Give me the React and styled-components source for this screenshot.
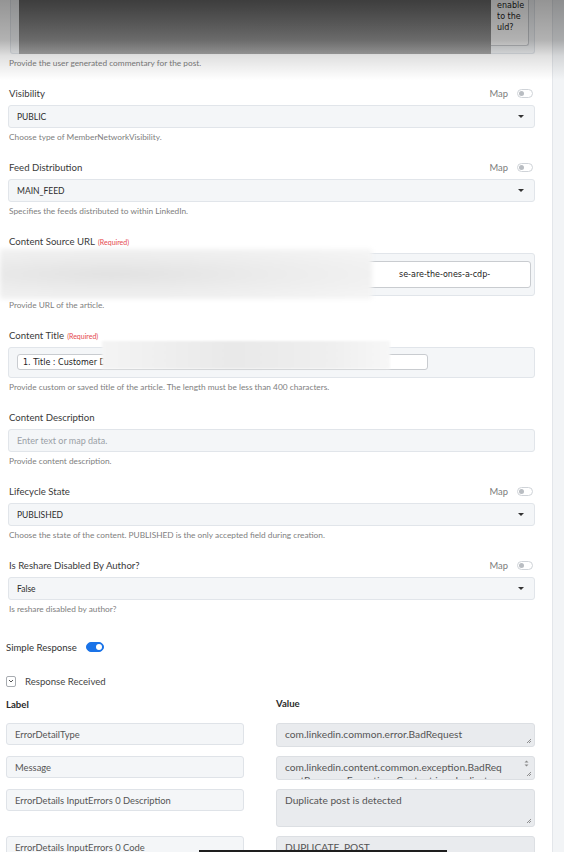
import React from "react";
import styled, { createGlobalStyle, css } from "styled-components";

const GlobalStyle = createGlobalStyle`
  html, body {
    margin: 0;
    padding: 0;
    background: #ffffff;
  }
  body {
    font-family: Lato, "Open Sans", sans-serif;
    color: #333;
  }
`;

const FIELDS = [
  {
    label: "Visibility",
    type: "select",
    value: "PUBLIC",
    map: true,
    help: "Choose type of MemberNetworkVisibility.",
  },
  {
    label: "Feed Distribution",
    type: "select",
    value: "MAIN_FEED",
    map: true,
    help: "Specifies the feeds distributed to within LinkedIn.",
  },
  {
    label: "Content Source URL",
    required: true,
    type: "url",
    value: "se-are-the-ones-a-cdp-",
    help: "Provide URL of the article.",
  },
  {
    label: "Content Title",
    required: true,
    type: "title",
    value: "1. Title : Customer D",
    help: "Provide custom or saved title of the article. The length must be less than 400 characters.",
  },
  {
    label: "Content Description",
    type: "text",
    placeholder: "Enter text or map data.",
    help: "Provide content description.",
  },
  {
    label: "Lifecycle State",
    type: "select",
    value: "PUBLISHED",
    map: true,
    help: "Choose the state of the content. PUBLISHED is the only accepted field during creation.",
  },
  {
    label: "Is Reshare Disabled By Author?",
    type: "select",
    value: "False",
    map: true,
    help: "Is reshare disabled by author?",
  },
];

const RESPONSE = [
  { label: "ErrorDetailType", value: "com.linkedin.common.error.BadRequest", h: 24 },
  {
    label: "Message",
    value:
      "com.linkedin.content.common.exception.BadRequestResponseException: Content is a duplicate",
    h: 24,
    scroll: true,
  },
  { label: "ErrorDetails InputErrors 0 Description", value: "Duplicate post is detected", h: 38 },
  { label: "ErrorDetails InputErrors 0 Code", value: "DUPLICATE_POST", h: 24 },
];

const Page = styled.div`
  position: relative;
  display: flex;
  height: 852px;
  overflow: hidden;
  background: #fff;
`;

const Main = styled.div`
  flex: 1;
  padding: 0 17px 0 6px;
  min-width: 0;
`;

const ScrollTrack = styled.div`
  width: 11px;
  background: #f2f4f6;
  border-left: 1px solid #e3e6ea;
`;

const Form = styled.div`
  padding-left: 2px;
`;

const Field = styled.div`
  position: relative;
  margin-bottom: 18px;
`;

const FieldHead = styled.div`
  display: flex;
  align-items: center;
  justify-content: space-between;
  height: 12px;
  margin-bottom: 6px;
  padding-left: 1px;
`;

const Label = styled.span`
  font-size: 9.6px;
  color: #3a3a3a;
`;

const Required = styled.span`
  margin-left: 3px;
  font-size: 7px;
  color: #e5484d;
`;

const MapGroup = styled.div`
  display: flex;
  align-items: center;
  gap: 9px;
  margin-right: 2px;
  font-size: 9.4px;
  color: #7c7c7c;
`;

const Switch = styled.span`
  position: relative;
  display: inline-block;
  box-sizing: border-box;
  width: ${(p) => (p.$on ? 18 : 16)}px;
  height: ${(p) => (p.$on ? 10 : 9)}px;
  border-radius: 6px;
  border: 1px solid ${(p) => (p.$on ? "#1a73e8" : "#cfd3d8")};
  background: ${(p) => (p.$on ? "#1a73e8" : "#fff")};

  &::after {
    content: "";
    position: absolute;
    top: 1px;
    ${(p) =>
      p.$on
        ? css`
            right: 1px;
            width: 6px;
            height: 6px;
            background: #fff;
          `
        : css`
            left: 1px;
            width: 5px;
            height: 5px;
            background: #b9bdc2;
          `}
    border-radius: 50%;
  }
`;

const Select = styled.div`
  box-sizing: border-box;
  display: flex;
  align-items: center;
  justify-content: space-between;
  height: 23px;
  padding: 0 10px 0 8px;
  border: 1px solid #e1e5ea;
  border-radius: 3px;
  background: #f4f6f8;
  font-size: 8.5px;
  color: #2c2c2c;
`;

const Caret = styled.span`
  width: 0;
  height: 0;
  border-left: 3px solid transparent;
  border-right: 3px solid transparent;
  border-top: 3px solid #333;
`;

const Placeholder = styled.span`
  color: #9aa0a6;
  font-size: 9px;
`;

const Well = styled.div`
  box-sizing: border-box;
  height: ${(p) => p.$h}px;
  padding: ${(p) => p.$pad};
  border: 1px solid #e1e5ea;
  border-radius: 3px;
  background: #f4f6f8;
`;

const InnerInput = styled.div`
  box-sizing: border-box;
  display: flex;
  align-items: center;
  width: ${(p) => p.$w || "auto"};
  height: 100%;
  padding: 0 5px;
  border: 1px solid #c9ccd0;
  border-radius: 3px;
  background: #fff;
  font-family: "DejaVu Sans", Verdana, sans-serif;
  font-size: 8px;
  color: #222;
`;

const UrlText = styled.span`
  margin-left: auto;
  width: 126px;
`;

const Help = styled.div`
  margin-top: 4px;
  padding-left: 1px;
  line-height: 11px;
  font-size: 8.3px;
  color: #808080;
`;

const Commentary = styled.div`
  position: relative;
  margin-left: 2px;
`;

const CommentWell = styled.div`
  box-sizing: border-box;
  height: 54px;
  padding: 0 5px 7px 8px;
  border: 1px solid #e1e5ea;
  border-top: none;
  border-radius: 0 0 3px 3px;
  background: #f4f6f8;
`;

const CommentBox = styled.div`
  box-sizing: border-box;
  display: flex;
  justify-content: flex-end;
  height: 100%;
  border: 1px solid #c9ccd0;
  border-top: none;
  border-radius: 0 0 3px 3px;
  background: #fff;
`;

const CommentLines = styled.div`
  width: 31px;
  font-family: "DejaVu Sans", Verdana, sans-serif;
  font-size: 8px;
  line-height: 11px;
  color: #222;
  white-space: nowrap;
  overflow: hidden;
`;

/* soft patches laid over private text */
const Smudge = styled.div`
  position: absolute;
  pointer-events: none;
  left: ${(p) => p.$x}px;
  top: ${(p) => p.$y}px;
  width: ${(p) => p.$w}px;
  height: ${(p) => p.$h}px;
  background: ${(p) => p.$bg};
  filter: blur(${(p) => p.$blur || 0}px);
`;

const TopShade = styled.div`
  position: absolute;
  left: 0;
  top: 0;
  right: 0;
  height: 80px;
  pointer-events: none;
  background: linear-gradient(
    rgba(0, 0, 0, 0.42) 0px,
    rgba(0, 0, 0, 0.3) 40px,
    rgba(0, 0, 0, 0.12) 56px,
    rgba(0, 0, 0, 0) 80px
  );
`;

const SwitchRow = styled.div`
  display: flex;
  align-items: center;
  gap: 9px;
  height: 12px;
  margin-top: 26px;
  font-size: 9.6px;
  color: #333;
`;

const ToggleRow = styled.div`
  display: flex;
  align-items: center;
  gap: 9px;
  height: 12px;
  margin-top: 22px;
  font-size: 9.6px;
  color: #444;
`;

const ChevronBox = styled.span`
  box-sizing: border-box;
  display: inline-flex;
  align-items: center;
  justify-content: center;
  width: 10px;
  height: 11px;
  border: 1px solid #a8acb1;
  border-radius: 2px;
`;

const Grid = styled.div`
  display: grid;
  grid-template-columns: 238px 259px;
  column-gap: 32px;
  row-gap: 9px;
  align-items: start;
`;

const ColHead = styled.div`
  height: 12px;
  line-height: 12px;
  margin: 12px 0 3px;
  font-size: 9.6px;
  font-weight: 700;
  color: #2b2b2b;
  transform: translateY(${(p) => p.$dy || 0}px);
`;

const KeyCell = styled.div`
  box-sizing: border-box;
  display: flex;
  align-items: center;
  height: 22px;
  padding: 0 8px;
  border: 1px solid #dfe3e8;
  border-radius: 3px;
  background: #f4f6f8;
  font-size: 9.4px;
  color: #555;
`;

const ValueCell = styled.div`
  position: relative;
  box-sizing: border-box;
  height: ${(p) => p.$h}px;
  padding: 4px ${(p) => (p.$scroll ? 28 : 8)}px 0 8px;
  border: 1px solid #dcdfe3;
  border-radius: 3px;
  background: #e9ebee;
  font-size: 10.2px;
  line-height: 13px;
  color: #555;
  overflow: hidden;
  word-break: break-all;
`;

const Grip = styled.svg`
  position: absolute;
  right: 3px;
  bottom: 3px;
`;

const Spinner = styled.svg`
  position: absolute;
  right: 5px;
  top: 3px;
`;

const TooltipEdge = styled.div`
  position: absolute;
  left: 199px;
  bottom: 0;
  width: 248px;
  height: 2px;
  background: #1e1e1e;
`;

const MapSwitch = () => (
  <MapGroup>
    Map
    <Switch />
  </MapGroup>
);

const ResizeGrip = () => (
  <Grip width="5" height="5" viewBox="0 0 5 5">
    <path d="M1 5 L5 1 M3 5 L5 3" stroke="#777" strokeWidth="0.8" />
  </Grip>
);

const FieldControl = ({ field }) => {
  if (field.type === "select") {
    return (
      <Select>
        {field.value}
        <Caret />
      </Select>
    );
  }
  if (field.type === "url") {
    return (
      <Well $h={43} $pad="7px 3px 7px 8px">
        <InnerInput>
          <UrlText>{field.value}</UrlText>
        </InnerInput>
      </Well>
    );
  }
  if (field.type === "title") {
    return (
      <Well $h={31} $pad="6px 8px 7px 8px">
        <InnerInput $w="411px">{field.value}</InnerInput>
      </Well>
    );
  }
  return (
    <Select>
      <Placeholder>{field.placeholder}</Placeholder>
    </Select>
  );
};

export default function App() {
  return (
    <>
      <GlobalStyle />
      <Page>
        <Main>
          <Form>
            <Commentary>
              <CommentWell>
                <CommentBox>
                  <CommentLines>
                    enable
                    <br />
                    to the
                    <br />
                    uld?
                  </CommentLines>
                </CommentBox>
              </CommentWell>
              <Smudge
                $x={9}
                $y={0}
                $w={472}
                $h={54}
                $bg="linear-gradient(#6a6a6a, #a9a9a9)"
              />
            </Commentary>
            <Help>Provide the user generated commentary for the post.</Help>
            <div style={{ height: 18 }} />

            {FIELDS.map((f) => (
              <Field key={f.label}>
                <FieldHead>
                  <Label>
                    {f.label}
                    {f.required && <Required>(Required)</Required>}
                  </Label>
                  {f.map && <MapSwitch />}
                </FieldHead>
                <FieldControl field={f} />
                <Help>{f.help}</Help>
                {f.type === "url" && (
                  <Smudge
                    $x={-8}
                    $y={14}
                    $w={372}
                    $h={50}
                    $blur={2}
                    $bg="radial-gradient(ellipse at 30% 50%, #e2e2e2 0%, #ececec 45%, #f6f6f6 100%)"
                  />
                )}
                {f.type === "title" && (
                  <Smudge
                    $x={94}
                    $y={12}
                    $w={288}
                    $h={28}
                    $blur={1}
                    $bg="linear-gradient(90deg, #f4f4f4, #e9e9e9 45%, #efefef 80%, #f7f7f7)"
                  />
                )}
              </Field>
            ))}
          </Form>

          <SwitchRow>
            Simple Response
            <Switch $on />
          </SwitchRow>

          <ToggleRow>
            <ChevronBox>
              <svg width="6" height="4" viewBox="0 0 6 4">
                <path d="M1 1 L3 3 L5 1" fill="none" stroke="#555" strokeWidth="1" />
              </svg>
            </ChevronBox>
            Response Received
          </ToggleRow>

          <Grid>
            <ColHead>Label</ColHead>
            <ColHead $dy={-1}>Value</ColHead>
            {RESPONSE.map((r) => (
              <React.Fragment key={r.label}>
                <KeyCell>{r.label}</KeyCell>
                <ValueCell $h={r.h} $scroll={r.scroll}>
                  {r.value}
                  {r.scroll && (
                    <Spinner width="5" height="7" viewBox="0 0 5 7">
                      <path d="M0.5 2.5 L2.5 0.5 L4.5 2.5 Z M0.5 4.5 L2.5 6.5 L4.5 4.5 Z" fill="#888" />
                    </Spinner>
                  )}
                  <ResizeGrip />
                </ValueCell>
              </React.Fragment>
            ))}
          </Grid>
        </Main>
        <ScrollTrack />
        <TopShade />
        <TooltipEdge />
      </Page>
    </>
  );
}
